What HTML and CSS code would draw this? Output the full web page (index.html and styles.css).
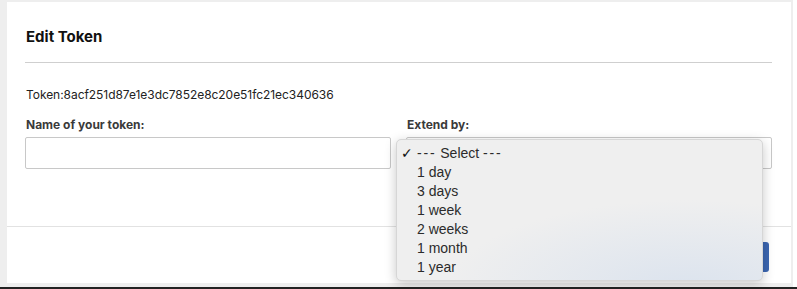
FILE: index.html
```html
<!DOCTYPE html>
<html lang="en">
<head>
  <meta charset="UTF-8" />
  <meta name="viewport" content="width=device-width, initial-scale=1.0">
  <title>Edit Token</title>
  <link rel="stylesheet" href="styles.css">
</head>
<body>

  <div class="frame">
    <div class="modal">
      <div class="modal-header">
        <h4>Edit Token</h4>
      </div>

      <div class="modal-body">
        <p class="token">Token:8acf251d87e1e3dc7852e8c20e51fc21ec340636</p>

        <div class="form-row">
          <div class="field">
            <label for="tokenName">Name of your token:</label>
            <input type="text" id="tokenName">
          </div>
          <div class="field extend">
            <label for="extendBy">Extend by:</label>
            <div class="select-box" id="extendBy"></div>

            <ul class="select-menu">
              <li class="checked"><span class="check">✓</span><span class="dashes">---</span> Select <span class="dashes">---</span></li>
              <li>1 day</li>
              <li>3 days</li>
              <li>1 week</li>
              <li>2 weeks</li>
              <li>1 month</li>
              <li>1 year</li>
            </ul>
          </div>
        </div>
      </div>

      <div class="modal-footer">
        <button class="save-button">Save</button>
      </div>
    </div>
  </div>

  <div class="dock-line"></div>

</body>
</html>
```

FILE: styles.css
```css
html {
  background: #ffffff;
}

body {
  margin: 0;
  font-family: 'Inter', 'Liberation Sans', sans-serif;
  color: #333;
}

.frame {
  width: 793px;
  height: 287px;
  background: #eeeeee;
  padding: 2px 2px 0 7px;
  box-sizing: border-box;
}

.modal {
  background: #ffffff;
  height: 281px;
  display: flex;
  flex-direction: column;
}

.modal-header {
  margin: 0 19px 0 18px;
  padding: 27px 0 17px 1px;
  border-bottom: 1px solid #cfcfcf;
}

.modal-header h4 {
  margin: 0;
  font-size: 15px;
  font-weight: 700;
  color: #111;
  line-height: 16px;
}

.modal-body {
  padding: 0 19px 0 18px;
  height: 163px;
}

.token {
  margin: 25px 0 0 1px;
  font-size: 12px;
  line-height: 14px;
  color: #222;
  letter-spacing: -0.05px;
}

.form-row {
  display: flex;
  gap: 15px;
  margin-top: 16px;
}

.field {
  flex: 1;
  display: flex;
  flex-direction: column;
  position: relative;
}

.field label {
  font-size: 12px;
  font-weight: 700;
  color: #3a3a3a;
  line-height: 14px;
  margin: 0 0 5px 1px;
}

.field input,
.select-box {
  height: 32px;
  border: 1px solid #c8c8c8;
  border-radius: 2px;
  box-sizing: border-box;
  background: #fff;
}

.select-menu {
  position: absolute;
  left: -10px;
  top: 21px;
  width: 367px;
  height: 142px;
  margin: 0;
  padding: 4px 0;
  box-sizing: border-box;
  list-style: none;
  border-radius: 5px;
  border: 1px solid #d6d6d6;
  background:
    radial-gradient(ellipse 240px 90px at 290px 150px, #dbe3ee 0%, rgba(219,227,238,0) 100%),
    #efefef;
  box-shadow: 0 3px 12px rgba(0,0,0,0.22);
  font-family: 'Liberation Sans', sans-serif;
  font-size: 14px;
  color: #2b2b2b;
  z-index: 5;
}

.select-menu li {
  height: 19px;
  line-height: 19px;
  padding-left: 20px;
  position: relative;
}

.select-menu .dashes {
  letter-spacing: 1.8px;
}

.select-menu .check {
  position: absolute;
  left: 4px;
  font-size: 14px;
  font-family: 'DejaVu Sans', sans-serif;
  color: #111;
}

.modal-footer {
  flex: 1;
  border-top: 1px solid #e2e2e2;
  display: flex;
  justify-content: flex-end;
  align-items: flex-start;
  padding: 15px 22px 0 0;
}

.save-button {
  background: #3c67b2;
  color: #fff;
  border: none;
  border-radius: 3px;
  height: 30px;
  padding: 0 16px;
  font-size: 13px;
}

.dock-line {
  height: 2px;
  background: #222;
}
```
